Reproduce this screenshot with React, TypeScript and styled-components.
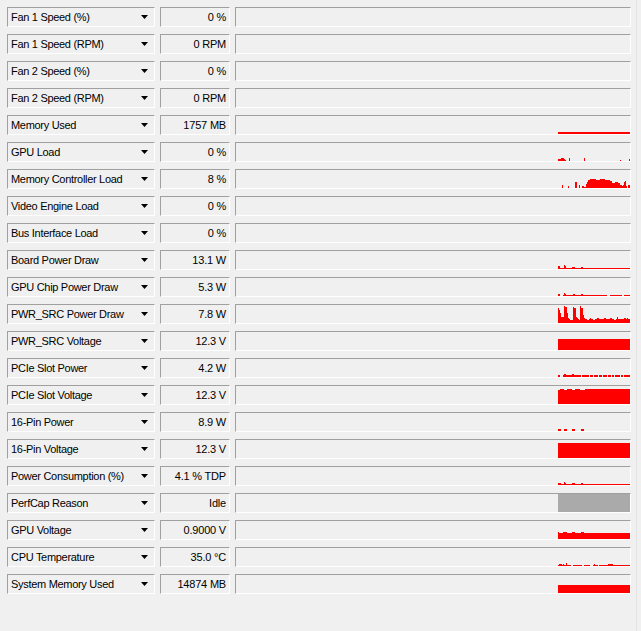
import React from 'react';
import styled, { createGlobalStyle } from 'styled-components';

const GlobalStyle = createGlobalStyle`
  html, body {
    margin: 0;
    padding: 0;
    background: #f0f0f0;
  }
  body {
    font-family: "Liberation Sans", Arial, sans-serif;
  }
`;

const Window = styled.div`
  display: flex;
  width: 641px;
  height: 631px;
  background: #f0f0f0;
  overflow: hidden;
`;

const SensorList = styled.div`
  width: 636px;
  padding: 7px 0 0 7px;
  box-sizing: border-box;
  display: flex;
  flex-direction: column;
  gap: 7px;
`;

const ScrollEdge = styled.div`
  flex: 1;
  border-left: 1px solid #e3e3e3;
`;

const Row = styled.div`
  display: flex;
  gap: 5px;
  height: 20px;
`;

const Sunken = styled.div`
  box-sizing: border-box;
  height: 20px;
  background: #f0f0f0;
  border-top: 1px solid #a0a0a0;
  border-left: 1px solid #a0a0a0;
  border-right: 1px solid #ffffff;
  border-bottom: 1px solid #ffffff;
`;

const NameBox = styled(Sunken)`
  width: 148px;
  display: flex;
  align-items: center;
  justify-content: space-between;
  padding: 0 6px 0 3px;
  font-size: 11px;
  letter-spacing: -0.3px;
  line-height: 18px;
  color: #000;
  white-space: nowrap;
`;

const ValueBox = styled(Sunken)`
  width: 70px;
  padding-right: 3px;
  text-align: right;
  font-size: 11px;
  letter-spacing: -0.2px;
  line-height: 18px;
  color: #000;
  white-space: nowrap;
`;

const GraphBox = styled(Sunken)`
  width: 396px;
  svg {
    display: block;
  }
`;

const Arrow = () => (
  <svg width="7" height="4" viewBox="0 0 7 4">
    <polygon points="0,0 7,0 3.5,4" fill="#000" />
  </svg>
);

// graph columns: x = 558 .. 629 on screen, 72 samples
const START = 558;
const COLS = 72;
type Span = [number, number, number];

const build = (base: number, spans: Span[] = []) => {
  const h = new Array(COLS).fill(base);
  spans.forEach(([a, b, v]) => {
    for (let x = a; x <= b; x++) h[x - START] = v;
  });
  return h;
};

const Graph: React.FC<{ data?: number[]; color?: string }> = ({ data, color = '#ff0000' }) => {
  const rects: React.ReactNode[] = [];
  if (data) {
    let i = 0;
    while (i < data.length) {
      let j = i;
      while (j + 1 < data.length && data[j + 1] === data[i]) j++;
      if (data[i] > 0) {
        rects.push(
          <rect key={i} x={START - 236 + i} y={18 - data[i]} width={j - i + 1} height={data[i]} fill={color} />
        );
      }
      i = j + 1;
    }
  }
  return (
    <GraphBox>
      <svg width="394" height="18" shapeRendering="crispEdges">{rects}</svg>
    </GraphBox>
  );
};

const sensors: { name: string; value: string; data?: number[]; color?: string }[] = [
  { name: 'Fan 1 Speed (%)', value: '0 %' },
  { name: 'Fan 1 Speed (RPM)', value: '0 RPM' },
  { name: 'Fan 2 Speed (%)', value: '0 %' },
  { name: 'Fan 2 Speed (RPM)', value: '0 RPM' },
  { name: 'Memory Used', value: '1757 MB', data: build(2) },
  {
    name: 'GPU Load',
    value: '0 %',
    data: build(0, [[558, 560, 2], [561, 563, 3], [564, 564, 2], [565, 565, 1], [569, 569, 3], [584, 584, 3], [620, 620, 1], [629, 629, 2]]),
  },
  {
    name: 'Memory Controller Load',
    value: '8 %',
    data: build(0, [
      [562, 562, 3], [568, 568, 2], [575, 576, 6], [579, 579, 3], [582, 583, 2], [584, 585, 1], [586, 586, 4],
      [587, 587, 6], [588, 589, 8], [590, 595, 9], [596, 599, 8], [600, 604, 9], [605, 609, 8], [610, 611, 7],
      [612, 614, 5], [615, 617, 6], [618, 619, 5], [620, 621, 3], [622, 622, 2], [623, 623, 3], [624, 624, 6],
      [625, 625, 7], [626, 626, 2], [628, 629, 3],
    ]),
  },
  { name: 'Video Engine Load', value: '0 %' },
  { name: 'Bus Interface Load', value: '0 %' },
  {
    name: 'Board Power Draw',
    value: '13.1 W',
    data: build(1, [[558, 559, 3], [564, 564, 4], [565, 565, 3], [572, 574, 2], [581, 582, 2]]),
  },
  {
    name: 'GPU Chip Power Draw',
    value: '5.3 W',
    data: build(1, [[558, 559, 2], [560, 562, 0], [564, 564, 3], [565, 565, 2], [573, 574, 2], [581, 582, 2], [607, 609, 0], [622, 623, 0]]),
  },
  {
    name: 'PWR_SRC Power Draw',
    value: '7.8 W',
    data: build(4, [
      [558, 558, 15], [559, 559, 13], [560, 560, 10], [561, 563, 6], [564, 564, 17], [565, 566, 16], [567, 567, 10],
      [568, 568, 5], [569, 569, 4], [570, 572, 3], [573, 573, 16], [574, 575, 15], [576, 576, 6], [577, 577, 5],
      [578, 578, 4], [579, 579, 3], [580, 580, 17], [581, 582, 15], [583, 583, 8], [584, 584, 5], [587, 588, 3],
      [590, 590, 5], [593, 594, 3], [597, 598, 5], [604, 605, 5], [610, 611, 5], [614, 615, 3], [617, 617, 6],
      [624, 625, 5], [627, 627, 5],
    ]),
  },
  { name: 'PWR_SRC Voltage', value: '12.3 V', data: build(11) },
  {
    name: 'PCIe Slot Power',
    value: '4.2 W',
    data: build(2, [
      [560, 562, 0], [564, 565, 3], [572, 573, 3], [581, 581, 0], [589, 589, 0], [593, 593, 0], [598, 598, 0],
      [602, 602, 0], [607, 607, 0], [611, 611, 0], [614, 614, 0], [620, 620, 0], [623, 623, 0],
    ]),
  },
  {
    name: 'PCIe Slot Voltage',
    value: '12.3 V',
    data: build(15, [[558, 559, 14], [564, 566, 14], [572, 574, 14], [580, 584, 14]]),
  },
  {
    name: '16-Pin Power',
    value: '8.9 W',
    data: build(0, [[558, 560, 2], [564, 566, 2], [572, 574, 2], [581, 583, 2]]),
  },
  { name: '16-Pin Voltage', value: '12.3 V', data: build(15) },
  {
    name: 'Power Consumption (%)',
    value: '4.1 % TDP',
    data: build(1, [[558, 560, 2], [564, 564, 3], [565, 565, 2], [572, 574, 2], [581, 582, 2]]),
  },
  { name: 'PerfCap Reason', value: 'Idle', data: build(18), color: '#aaaaaa' },
  {
    name: 'GPU Voltage',
    value: '0.9000 V',
    data: build(6, [[558, 558, 7], [563, 566, 7], [572, 574, 7], [581, 583, 7]]),
  },
  {
    name: 'CPU Temperature',
    value: '35.0 °C',
    data: build(1, [
      [559, 561, 2], [563, 563, 2], [566, 566, 3], [571, 572, 0], [582, 583, 0], [590, 592, 0], [594, 594, 2],
      [598, 598, 0], [608, 612, 2],
    ]),
  },
  { name: 'System Memory Used', value: '14874 MB', data: build(8) },
];

const App: React.FC = () => {
  return (
    <>
      <GlobalStyle />
      <Window>
        <SensorList>
          {sensors.map((s) => (
            <Row key={s.name}>
              <NameBox>
                <span>{s.name}</span>
                <Arrow />
              </NameBox>
              <ValueBox>{s.value}</ValueBox>
              <Graph data={s.data} color={s.color} />
            </Row>
          ))}
        </SensorList>
        <ScrollEdge />
      </Window>
    </>
  );
};

export default App;
